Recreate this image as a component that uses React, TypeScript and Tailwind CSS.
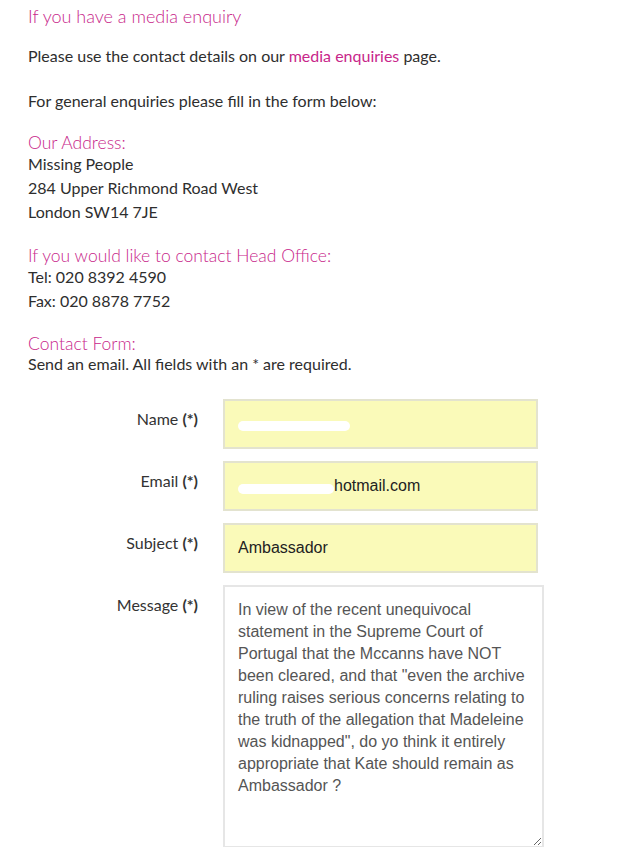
import React from "react";

const pink = "text-[#c8268a]";

function Field({ label, children }: { label: string; children: React.ReactNode }) {
  return (
    <div className="flex items-start">
      <div className="w-[198px] pt-[9px] text-right text-[16px] leading-[22px] text-[#333]">
        {label} <span className="font-bold">(*)</span>
      </div>
      <div className="ml-[25px]">{children}</div>
    </div>
  );
}

function Box({ children }: { children?: React.ReactNode }) {
  return (
    <div className="flex h-[50px] w-[315px] items-center border-2 border-[#e3e3cf] bg-[#fafab9] px-[13px] font-['Liberation_Sans',Arial,sans-serif] text-[16px] text-[#222]">
      {children}
    </div>
  );
}

export default function App() {
  const msg =
    'In view of the recent unequivocal statement in the Supreme Court of Portugal that the Mccanns have NOT been cleared, and that "even the archive ruling raises serious concerns relating to the truth of the allegation that Madeleine was kidnapped", do yo think it entirely appropriate that Kate should remain as Ambassador ?';
  return (
    <div className="h-[847px] w-[623px] overflow-hidden bg-white pl-[28px] font-['Lato','Open_Sans',sans-serif] text-[16px] text-[#2e2e2e]">
      <h1 className={`pt-[4px] text-[18px] font-light leading-[24px] ${pink}`}>If you have a media enquiry</h1>
      <p className="mt-[18px] leading-[20px]">
        Please use the contact details on our <span className={pink}>media enquiries</span> page.
      </p>
      <p className="mt-[25px] leading-[20px]">For general enquiries please fill in the form below:</p>

      <h2 className={`mt-[23px] text-[17.5px] font-light leading-[18px] ${pink}`}>Our Address:</h2>
      <p className="leading-[24px]">Missing People</p>
      <p className="leading-[24px]">284 Upper Richmond Road West</p>
      <p className="leading-[24px]">London SW14 7JE</p>

      <h2 className={`mt-[23px] text-[17.5px] font-light leading-[18px] ${pink}`}>If you would like to contact Head Office:</h2>
      <p className="leading-[24px]">Tel: 020 8392 4590</p>
      <p className="leading-[24px]">Fax: 020 8878 7752</p>

      <h2 className={`mt-[22px] text-[17.5px] font-light leading-[18px] ${pink}`}>Contact Form:</h2>
      <p className="leading-[22px]">Send an email. All fields with an * are required.</p>

      <div className="-ml-[28px] mt-[24px] flex flex-col gap-[12px]">
        <Field label="Name">
          <Box>
            <span className="mt-[4px] inline-block h-[10px] w-[112px] rounded-full bg-white" />
          </Box>
        </Field>
        <Field label="Email">
          <Box>
            <span className="flex items-center">
              <span className="mt-[6px] inline-block h-[10px] w-[96px] rounded-full bg-white" />
              <span>hotmail.com</span>
            </span>
          </Box>
        </Field>
        <Field label="Subject">
          <Box>Ambassador</Box>
        </Field>
        <Field label="Message">
          <textarea
            readOnly
            defaultValue={msg}
            className="h-[263px] w-[321px] resize border-2 border-[#e6e6e6] bg-white px-[13px] pt-[12px] font-['Liberation_Sans',Arial,sans-serif] text-[16px] leading-[22px] text-[#555] outline-none"
          />
        </Field>
      </div>
    </div>
  );
}
